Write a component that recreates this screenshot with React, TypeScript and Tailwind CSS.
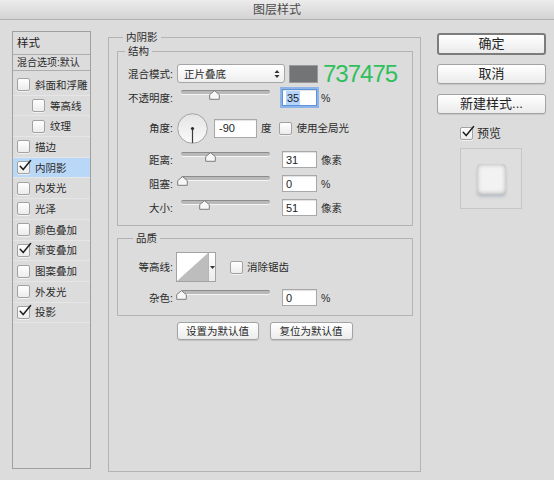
import React from 'react';

const effects = [
  { name: '斜面和浮雕', checked: false, sub: false, active: false },
  { name: '等高线', checked: false, sub: true, active: false },
  { name: '纹理', checked: false, sub: true, active: false },
  { name: '描边', checked: false, sub: false, active: false },
  { name: '内阴影', checked: true, sub: false, active: true },
  { name: '内发光', checked: false, sub: false, active: false },
  { name: '光泽', checked: false, sub: false, active: false },
  { name: '颜色叠加', checked: false, sub: false, active: false },
  { name: '渐变叠加', checked: true, sub: false, active: false },
  { name: '图案叠加', checked: false, sub: false, active: false },
  { name: '外发光', checked: false, sub: false, active: false },
  { name: '投影', checked: true, sub: false, active: false },
];

function Checkbox({ checked = false }: { checked?: boolean }) {
  return (
    <span className="relative flex h-[13px] w-[13px] shrink-0 rounded-[2px] border border-[#a2a2a2] bg-gradient-to-b from-white to-[#ececec] shadow-[0_1px_0_rgba(255,255,255,0.6)]">
      {checked && (
        <svg className="absolute -top-[3px] left-[0px] overflow-visible" width="14" height="14" viewBox="0 0 14 14">
          <path d="M2.2 7.2 L5.2 10.6 L12.6 1.6" fill="none" stroke="#1e1e1e" strokeWidth="1.5" strokeLinecap="round" strokeLinejoin="round" />
        </svg>
      )}
    </span>
  );
}

function Slider({ pos }: { pos: number }) {
  return (
    <div className="relative ml-[8px] h-[17px] w-[89px] shrink-0">
      <div className="mt-[1px] h-[4px] w-full rounded-full border-t border-[#8c8c8c] bg-[#b9b9b9] shadow-[0_1px_0_rgba(255,255,255,0.7)]" />
      <svg className="absolute top-[1px]" style={{ left: pos - 5 }} width="11" height="10" viewBox="0 0 11 10">
        <path d="M5.5 0.7 L10.3 4.6 V9.3 H0.7 V4.6 Z" fill="#f7f7f7" stroke="#7d7d7d" strokeWidth="1" strokeLinejoin="round" />
      </svg>
    </div>
  );
}

function NumBox({ value, focused = false }: { value: string; focused?: boolean }) {
  return (
    <div
      className={`ml-[12px] flex h-[17px] w-[35px] shrink-0 items-center border bg-white pl-[3px] font-['Liberation_Sans',sans-serif] text-[11px] text-[#222] shadow-[inset_0_1px_1px_rgba(0,0,0,0.12)] ${
        focused ? 'border-[#5f93d8] outline outline-2 outline-[#8db4ea]' : 'border-[#a8a8a8]'
      }`}
    >
      <span className={focused ? 'bg-[#b3d5fd] px-[1px]' : ''}>{value}</span>
    </div>
  );
}

function Label({ text }: { text: string }) {
  return <span className="w-[55px] shrink-0 text-right">{text}</span>;
}

function SliderRow({ label, pos, value, unit, focused, mt }: { label: string; pos: number; value: string; unit: string; focused?: boolean; mt: string }) {
  return (
    <div className={`flex h-[17px] items-center ${mt}`}>
      <Label text={label} />
      <Slider pos={pos} />
      <NumBox value={value} focused={focused} />
      <span className="ml-[4px]">{unit}</span>
    </div>
  );
}

export default function App() {
  return (
    <div className="h-[480px] w-[554px] overflow-hidden bg-[#dcdcdc] font-['Liberation_Sans','Noto_Sans_CJK_SC',sans-serif] text-[10.5px] leading-[14px] text-[#2a2a2a]">
      {/* title bar */}
      <div className="flex h-[20px] items-center justify-center border-b border-[#b2b2b2] bg-gradient-to-b from-[#ececec] to-[#d3d3d3] text-[12px] text-[#4a4a4a]">
        图层样式
      </div>

      <div className="flex items-start pl-[12px]">
        {/* left list */}
        <div className="mt-[11px] h-[438px] w-[79px] shrink-0 border border-[#a0a0a0]">
          <div className="flex h-[23px] items-center border-b border-[#aeaeae] pl-[4px] text-[11.5px] text-[#222]">样式</div>
          <div className="flex h-[16px] items-center border-b border-[#aeaeae] pl-[4px] text-[10px]">混合选项:默认</div>
          <div className="pt-[4px]">
            {effects.map((e) => (
              <div
                key={e.name}
                className={`flex h-[20.7px] items-center gap-[5px] border-b border-[#e6e6e6] ${e.sub ? 'pl-[19px]' : 'pl-[4px]'} ${
                  e.active ? 'bg-[#b9d7f6]' : ''
                }`}
              >
                <Checkbox checked={e.checked} />
                <span className="text-[10.5px]">{e.name}</span>
              </div>
            ))}
          </div>
        </div>

        {/* main panel */}
        <fieldset className="ml-[17px] mt-[10px] h-[442px] w-[313px] shrink-0 border border-[#b3b3b3]">
          <legend className="ml-[14px] px-[3px] leading-[14px]">内阴影</legend>

          <fieldset className="ml-[8px] w-[296px] border border-[#b3b3b3] pb-[9px]">
            <legend className="ml-[7px] px-[3px] leading-[14px]">结构</legend>

            <div className="mt-[6px] flex h-[19px] items-center">
              <Label text="混合模式:" />
              <div className="ml-[4px] flex h-[19px] w-[108px] items-center justify-between rounded-[3px] border border-[#a6a6a6] bg-gradient-to-b from-white to-[#eeeeee] pl-[6px] pr-[4px] text-[10.5px]">
                <span>正片叠底</span>
                <svg width="6" height="10" viewBox="0 0 6 10">
                  <path d="M0.5 4 L3 1 L5.5 4 Z M0.5 6 L3 9 L5.5 6 Z" fill="#333" />
                </svg>
              </div>
              <div className="ml-[4px] h-[18px] w-[29px] border border-[#9a9a9a] bg-[#737475]" />
              <span className="ml-[5px] font-['Liberation_Sans',sans-serif] text-[24px] leading-none tracking-[-1px] text-[#2fbf5c]">737475</span>
            </div>

            <SliderRow label="不透明度:" pos={33} value="35" unit="%" focused mt="mt-[6px]" />

            <div className="mt-[7px] flex h-[30px] items-center">
              <Label text="角度:" />
              <svg className="ml-[4px] shrink-0" width="31" height="31" viewBox="0 0 31 31">
                <defs>
                  <linearGradient id="dial" x1="0" y1="0" x2="0" y2="1">
                    <stop offset="0" stopColor="#e4e4e4" />
                    <stop offset="1" stopColor="#fafafa" />
                  </linearGradient>
                </defs>
                <circle cx="15.5" cy="15.5" r="14.8" fill="url(#dial)" stroke="#a3a3a3" strokeWidth="1" />
                <line x1="15.5" y1="15.5" x2="15.5" y2="30" stroke="#3c3c3c" strokeWidth="1.2" />
                <circle cx="15.5" cy="15.5" r="1.6" fill="#2c2c2c" />
              </svg>
              <div className="ml-[6px] flex h-[19px] w-[43px] items-center border border-[#a8a8a8] bg-white pl-[4px] font-['Liberation_Sans',sans-serif] text-[11px] text-[#222] shadow-[inset_0_1px_1px_rgba(0,0,0,0.12)]">
                -90
              </div>
              <span className="ml-[4px]">度</span>
              <span className="ml-[7px]">
                <Checkbox />
              </span>
              <span className="ml-[5px]">使用全局光</span>
            </div>

            <SliderRow label="距离:" pos={29} value="31" unit="像素" mt="mt-[8px]" />
            <SliderRow label="阻塞:" pos={1} value="0" unit="%" mt="mt-[7px]" />
            <SliderRow label="大小:" pos={23} value="51" unit="像素" mt="mt-[7px]" />
          </fieldset>

          <fieldset className="ml-[8px] mt-[5px] w-[296px] border border-[#b3b3b3] pb-[9px]">
            <legend className="ml-[15px] px-[3px] leading-[14px]">品质</legend>

            <div className="mt-[7px] flex h-[30px] items-center">
              <Label text="等高线:" />
              <div className="ml-[3px] flex h-[30px] shrink-0 border border-[#a3a3a3] bg-white">
                <svg width="31" height="28" viewBox="0 0 31 28">
                  <path d="M0 28 L31 0 V28 Z" fill="#bdbdbd" />
                </svg>
                <div className="flex w-[7px] items-center justify-center border-l border-[#b5b5b5] bg-gradient-to-b from-white to-[#ececec]">
                  <svg width="5" height="3" viewBox="0 0 5 3">
                    <path d="M0 0 H5 L2.5 3 Z" fill="#333" />
                  </svg>
                </div>
              </div>
              <span className="ml-[14px]">
                <Checkbox />
              </span>
              <span className="ml-[4px]">消除锯齿</span>
            </div>

            <SliderRow label="杂色:" pos={0} value="0" unit="%" mt="mt-[7px]" />
          </fieldset>

          <div className="mt-[6px] flex justify-center gap-[11px]">
            <button className="h-[18px] w-[82px] rounded-[3px] border border-[#a3a3a3] bg-gradient-to-b from-white to-[#ececec] text-[10.5px] leading-[16px] shadow-[0_1px_1px_rgba(0,0,0,0.12)]">
              设置为默认值
            </button>
            <button className="h-[18px] w-[83px] rounded-[3px] border border-[#a3a3a3] bg-gradient-to-b from-white to-[#ececec] text-[10.5px] leading-[16px] shadow-[0_1px_1px_rgba(0,0,0,0.12)]">
              复位为默认值
            </button>
          </div>
        </fieldset>

        {/* right column */}
        <div className="ml-[16px] mt-[13px] flex w-[109px] shrink-0 flex-col">
          <button className="h-[22px] w-full rounded-[3px] border-2 border-[#7c7c7c] bg-gradient-to-b from-white to-[#ebebeb] text-[13px] leading-[18px] text-[#222]">
            确定
          </button>
          <button className="mt-[9px] h-[20px] w-full rounded-[3px] border border-[#a3a3a3] bg-gradient-to-b from-white to-[#ebebeb] text-[13px] leading-[18px] text-[#222] shadow-[0_1px_1px_rgba(0,0,0,0.1)]">
            取消
          </button>
          <button className="mt-[10px] h-[20px] w-full rounded-[3px] border border-[#a3a3a3] bg-gradient-to-b from-white to-[#ebebeb] text-[13px] leading-[18px] text-[#222] shadow-[0_1px_1px_rgba(0,0,0,0.1)]">
            新建样式...
          </button>
          <div className="ml-[23px] mt-[13px] flex h-[13px] items-center gap-[4px]">
            <Checkbox checked />
            <span className="text-[12px]">预览</span>
          </div>
          <div className="ml-[23px] mt-[8px] flex h-[61px] w-[62px] items-center justify-center border border-[#c6c6c6] bg-[#dedede]">
            <div className="h-[30px] w-[29px] rounded-[4px] bg-[#f2f2f2] shadow-[inset_0_0_5px_rgba(0,0,0,0.3),0_3px_3px_rgba(90,110,140,0.25)]" />
          </div>
        </div>
      </div>
    </div>
  );
}
